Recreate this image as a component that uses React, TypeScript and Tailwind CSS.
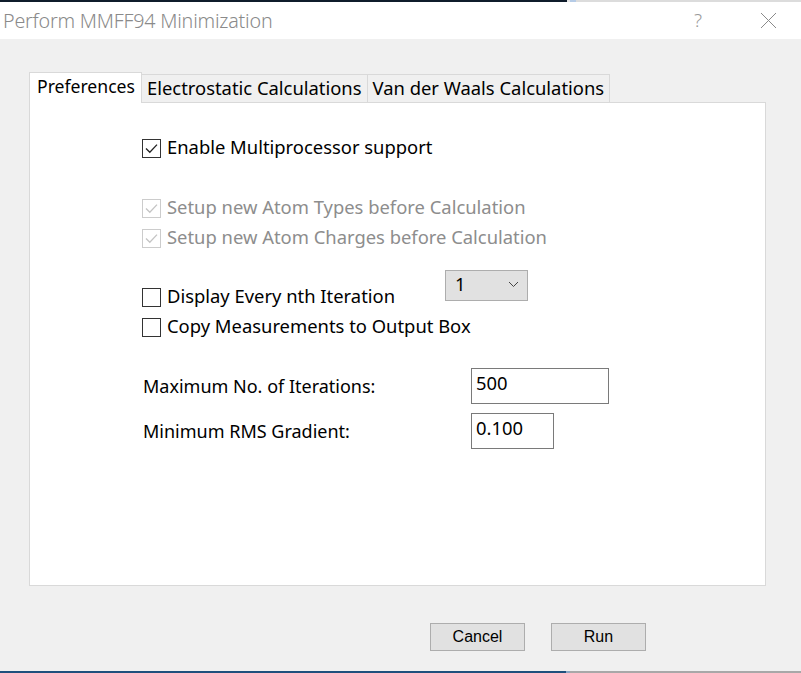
import { useState } from "react";

const uiFont = { fontFamily: '"Noto Sans", "Noto Sans CJK SC", sans-serif' };

const Check = ({
  checked,
  disabled,
  label,
}: {
  checked: boolean;
  disabled?: boolean;
  label: string;
}) => (
  <div className="flex items-center h-[30px]">
    <div
      className={`w-[19px] h-[19px] border flex items-center justify-center bg-white ${
        disabled ? "border-[#cccccc]" : "border-[#333333]"
      }`}
    >
      {checked && (
        <svg width="15" height="15" viewBox="0 0 15 15">
          <path
            d="M2 7.5 L5.8 11.2 L13 3.6"
            fill="none"
            stroke={disabled ? "#c4c4c4" : "#222222"}
            strokeWidth="1.3"
          />
        </svg>
      )}
    </div>
    <span
      className={`ml-[6px] pb-[2px] text-[18.4px] leading-none ${
        disabled ? "text-[#8d8d8d]" : "text-black"
      }`}
    >
      {label}
    </span>
  </div>
);

const App = () => {
  const [tab] = useState(0);
  const tabs = [
    "Preferences",
    "Electrostatic Calculations",
    "Van der Waals Calculations",
  ];

  return (
    <div className="w-[801px] h-[673px] bg-[#f0f0f0] flex flex-col overflow-hidden" style={uiFont}>
      {/* desktop remnants at top */}
      <div className="h-[2px] flex shrink-0">
        <div className="w-[567px] bg-[#0f1c2b]" />
        <div className="w-[3px] bg-[#e6e6e6]" />
        <div className="w-[6px] bg-[#b5cbe6]" />
        <div className="flex-1 bg-[#dcdcdc]" />
      </div>

      {/* title bar */}
      <div className="h-[37px] bg-white flex items-center shrink-0">
        <span className="ml-[3px] text-[19.7px] text-[#8a8a8a] font-light tracking-[-0.2px]">
          Perform MMFF94 Minimization
        </span>
        <span className="ml-auto mr-[58px] text-[19px] text-[#9a9a9a] font-light">?</span>
        <svg width="17" height="17" viewBox="0 0 17 17" className="mr-[24px]">
          <path d="M1 1 L16 16 M16 1 L1 16" stroke="#8a8a8a" strokeWidth="1" fill="none" />
        </svg>
      </div>

      <div className="flex-1 flex flex-col">
        {/* tabs */}
        <div className="mt-[33px] ml-[29px] flex items-end h-[30px]">
          {tabs.map((t, i) =>
            i === tab ? (
              <div
                key={t}
                className="w-[113px] h-[31px] -mb-px bg-white border border-b-0 border-[#d9d9d9] pl-[7px] pb-[3px] flex items-center text-[17.6px] text-black relative z-10 whitespace-nowrap"
              >
                {t}
              </div>
            ) : (
              <div
                key={t}
                className="h-[28px] bg-[#f0f0f0] border border-b-0 border-[#d9d9d9] -ml-px first:ml-0 px-[5px] pb-[1px] flex items-center text-[18.4px] text-black"
              >
                {t}
              </div>
            )
          )}
        </div>

        {/* panel */}
        <div className="ml-[29px] w-[737px] h-[484px] bg-white border border-[#d9d9d9] pl-[112px] pt-[30px] flex flex-col">
          <Check checked label="Enable Multiprocessor support" />
          <div className="h-[30px]" />
          <Check checked disabled label="Setup new Atom Types before Calculation" />
          <Check checked disabled label="Setup new Atom Charges before Calculation" />
          <div className="h-[29px]" />
          <div className="flex items-start">
            <div className="w-[303px]">
              <Check checked={false} label="Display Every nth Iteration" />
            </div>
            <div className="-mt-[12px] w-[83px] h-[31px] bg-[#e1e1e1] border border-[#adadad] flex items-center pl-[9px] pr-[8px] pb-[3px]">
              <span className="text-[18.4px] text-black">1</span>
              <svg width="11" height="7" viewBox="0 0 11 7" className="ml-auto">
                <path d="M1 1 L5.5 5.5 L10 1" stroke="#444" strokeWidth="1" fill="none" />
              </svg>
            </div>
          </div>
          <Check checked={false} label="Copy Measurements to Output Box" />

          <div className="mt-[26px] flex items-center">
            <span className="w-[329px] pl-px text-[18px] text-black">Maximum No. of Iterations:</span>
            <div className="w-[138px] h-[36px] border border-[#7a7a7a] bg-white pl-[4px] text-[18.4px] leading-[28px] text-black">
              500
            </div>
          </div>
          <div className="mt-[9px] flex items-center">
            <span className="w-[329px] pl-px text-[18px] text-black">Minimum RMS Gradient:</span>
            <div className="w-[83px] h-[36px] border border-[#7a7a7a] bg-white pl-[4px] text-[18.4px] leading-[28px] text-black">
              0.100
            </div>
          </div>
        </div>

        {/* buttons */}
        <div
          className="mt-[37px] ml-[430px] flex gap-[26px]"
          style={{ fontFamily: '"Liberation Sans", Arial, sans-serif' }}
        >
          <button className="w-[95px] h-[28px] bg-[#e1e1e1] border border-[#adadad] text-[16px] text-black">
            Cancel
          </button>
          <button className="w-[95px] h-[28px] bg-[#e1e1e1] border border-[#adadad] text-[16px] text-black">
            Run
          </button>
        </div>
      </div>

      {/* desktop remnants at bottom */}
      <div className="h-[2px] flex shrink-0">
        <div className="w-[566px] bg-[#1f4f7c]" />
        <div className="w-[4px] bg-[#8aa6c4]" />
        <div className="flex-1 bg-[#a8a8a8]" />
      </div>
    </div>
  );
};

export default App;
